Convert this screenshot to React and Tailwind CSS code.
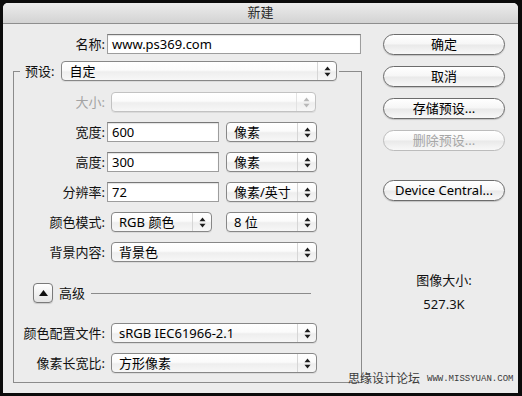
import React from 'react';

const FONT = "font-['Noto_Sans','Noto_Sans_CJK_SC',sans-serif]";

function Arrows({ disabled }) {
  const c = disabled ? '#b8b8b8' : '#1c1c1c';
  return (
    <svg width="7" height="11" viewBox="0 0 7 11">
      <path d="M3.5 0.5 L6.5 4.2 H0.5 Z" fill={c} />
      <path d="M3.5 10.5 L6.5 6.8 H0.5 Z" fill={c} />
    </svg>
  );
}

function Select({ value, className = '', disabled }) {
  return (
    <div
      className={`flex h-[20px] items-stretch rounded-[4px] border ${
        disabled ? 'border-[#c2c2c2] text-[#a0a0a0]' : 'border-[#878787] text-black'
      } bg-[linear-gradient(to_bottom,#ffffff_0%,#fbfbfb_45%,#eeeeee_55%,#f7f7f7_100%)] shadow-[0_1px_0_rgba(0,0,0,0.07)] ${className}`}
    >
      <div className="flex flex-1 items-center truncate pl-[7px] text-[13px] leading-none">{value}</div>
      <div className={`flex w-[19px] items-center justify-center border-l ${disabled ? 'border-[#e2e2e2]' : 'border-[#d6d6d6]'}`}>
        <Arrows disabled={disabled} />
      </div>
    </div>
  );
}

function Field({ value, className = '' }) {
  return (
    <div
      className={`flex h-[20px] items-center border border-[#9d9d9d] border-t-[#777] bg-white pl-[4px] text-[13px] leading-none text-black shadow-[inset_0_1px_1px_rgba(0,0,0,0.12)] ${className}`}
    >
      {value}
    </div>
  );
}

function Label({ children, disabled, className = 'w-[91px]' }) {
  return (
    <div className={`shrink-0 text-right text-[13px] leading-none ${disabled ? 'text-[#a3a3a3]' : 'text-[#111]'} ${className}`}>
      {children}
    </div>
  );
}

function Button({ children, disabled, className = '' }) {
  return (
    <div
      className={`flex h-[21px] w-[122px] items-center justify-center rounded-full border text-[13px] leading-none ${
        disabled ? 'border-[#bcbcbc] text-[#a6a6a6] shadow-none' : 'border-[#6c6c6c] text-black shadow-[0_1px_1px_rgba(0,0,0,0.18)]'
      } bg-[linear-gradient(to_bottom,#ffffff_0%,#f6f6f6_48%,#e9e9e9_52%,#f8f8f8_100%)] ${className}`}
    >
      {children}
    </div>
  );
}

export default function App() {
  return (
    <div className={`relative h-[396px] w-[522px] overflow-hidden bg-[#0b0b0b] p-[3px] ${FONT}`}>
      <div className="flex h-[390px] w-[515px] flex-col overflow-hidden rounded-t-[5px] bg-[#ececec]">
        {/* title bar */}
        <div className="flex h-[21px] shrink-0 items-center justify-center border-b border-[#8e8e8e] bg-[linear-gradient(to_bottom,#ececec,#d3d3d3)] text-[13px] text-[#2a2a2a]">
          新建
        </div>

        <div className="flex">
          {/* left column */}
          <div className="w-[365px]">
            <div className="mt-[10px] flex items-center">
              <Label className="w-[102px]">名称:</Label>
              <Field value="www.ps369.com" className="ml-[2px] w-[254px]" />
            </div>

            <div className="ml-[10px] mt-[17px] w-[349px] border border-[#8b8b8b] pb-[9px]">
              <div className="-mt-[11px] ml-[6px] flex w-fit items-center bg-[#ececec] pl-[5px] pr-[2px]">
                <div className="text-[13px] leading-none text-[#111]">预设:</div>
                <Select value="自定" className="ml-[7px] w-[276px]" />
              </div>

              <div className="mt-[11px] flex items-center">
                <Label disabled>大小:</Label>
                <Select value="" disabled className="ml-[6px] w-[205px]" />
              </div>
              <div className="mt-[10px] flex items-center">
                <Label>宽度:</Label>
                <Field value="600" className="ml-[2px] w-[112px]" />
                <Select value="像素" className="ml-[7px] w-[91px]" />
              </div>
              <div className="mt-[10px] flex items-center">
                <Label>高度:</Label>
                <Field value="300" className="ml-[2px] w-[112px]" />
                <Select value="像素" className="ml-[7px] w-[91px]" />
              </div>
              <div className="mt-[10px] flex items-center">
                <Label>分辨率:</Label>
                <Field value="72" className="ml-[2px] w-[112px]" />
                <Select value="像素/英寸" className="ml-[7px] w-[91px]" />
              </div>
              <div className="mt-[10px] flex items-center">
                <Label>颜色模式:</Label>
                <Select value="RGB 颜色" className="ml-[6px] w-[101px]" />
                <Select value="8 位" className="ml-[14px] w-[91px]" />
              </div>
              <div className="mt-[10px] flex items-center">
                <Label>背景内容:</Label>
                <Select value="背景色" className="ml-[6px] w-[206px]" />
              </div>

              <div className="mt-[21px] flex h-[20px] items-center">
                <div className="ml-[19px] flex h-[20px] w-[20px] items-center justify-center rounded-[4px] border border-[#7a7a7a] bg-[linear-gradient(to_bottom,#ffffff,#e4e4e4)] shadow-[0_1px_1px_rgba(0,0,0,0.15)]">
                  <svg width="9" height="6" viewBox="0 0 9 6">
                    <path d="M4.5 0 L9 6 H0 Z" fill="#111" />
                  </svg>
                </div>
                <div className="ml-[6px] text-[13px] leading-none text-[#111]">高级</div>
                <div className="ml-[6px] h-px w-[220px] bg-[#8b8b8b]" />
              </div>

              <div className="mt-[20px] flex items-center">
                <Label>颜色配置文件:</Label>
                <Select value="sRGB IEC61966-2.1" className="ml-[6px] w-[206px]" />
              </div>
              <div className="mt-[10px] flex items-center">
                <Label>像素长宽比:</Label>
                <Select value="方形像素" className="ml-[6px] w-[206px]" />
              </div>
            </div>
          </div>

          {/* right column */}
          <div className="flex flex-col pl-[15px]">
            <Button className="mt-[10px]">确定</Button>
            <Button className="mt-[11px]">取消</Button>
            <Button className="mt-[11px]">存储预设...</Button>
            <Button className="mt-[11px]" disabled>删除预设...</Button>
            <Button className="mt-[29px]">Device Central...</Button>
            <div className="mt-[71px] w-[122px] text-center text-[13px] leading-[16px] text-[#111]">图像大小:</div>
            <div className="mt-[8px] w-[122px] text-center text-[13px] leading-[16px] text-[#111]">527.3K</div>
          </div>
        </div>
      </div>

      {/* watermark */}
      <div className="absolute left-[348px] top-[373px] flex items-center text-[#3a3a3a]">
        <span className="text-[12px] leading-none">思缘设计论坛</span>
        <span className="ml-[7px] font-['Liberation_Mono',monospace] text-[9px] leading-none">WWW.MISSYUAN.COM</span>
      </div>
    </div>
  );
}
